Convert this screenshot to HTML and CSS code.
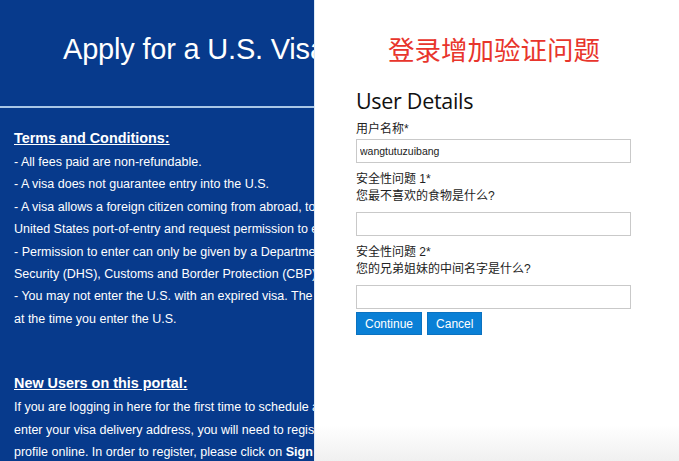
FILE: index.html
```html
<!DOCTYPE html>
<html lang="zh">
<head>
    <meta charset="UTF-8">
    <meta name="viewport" content="width=device-width, initial-scale=1.0">
    <title>Apply for a U.S. Visa</title>
    <link rel="stylesheet" href="styles.css">
</head>
<body>

    <div class="portal">
        <div class="portal-header">
            <h1 class="portal-title">Apply for a U.S. Visa</h1>
        </div>
        <div class="portal-body">
            <h2 class="portal-heading">Terms and Conditions:</h2>
            <p class="portal-line">- All fees paid are non-refundable.</p>
            <p class="portal-line">- A visa does not guarantee entry into the U.S.</p>
            <p class="portal-line">- A visa allows a foreign citizen coming from abroad, to travel to the</p>
            <p class="portal-line">United States port-of-entry and request permission to enter the U.S.</p>
            <p class="portal-line">- Permission to enter can only be given by a Department of Homeland</p>
            <p class="portal-line">Security (DHS), Customs and Border Protection (CBP) official.</p>
            <p class="portal-line">- You may not enter the U.S. with an expired visa. The visa must be valid</p>
            <p class="portal-line">at the time you enter the U.S.</p>

            <h2 class="portal-heading new-users">New Users on this portal:</h2>
            <p class="portal-line">If you are logging in here for the first time to schedule an appointment or</p>
            <p class="portal-line">enter your visa delivery address, you will need to register and create a</p>
            <p class="portal-line">profile online. In order to register, please click on <b>Sign Up</b></p>
        </div>
    </div>

    <div class="details">
        <div class="notice">登录增加验证问题</div>
        <h2 class="details-title">User Details</h2>
        <form class="details-form">
            <label class="field-label first">用户名称*</label>
            <input class="field-input" type="text" value="wangtutuzuibang">

            <label class="field-label question">安全性问题 1*<br>您最不喜欢的食物是什么?</label>
            <input class="field-input" type="text">

            <label class="field-label question">安全性问题 2*<br>您的兄弟姐妹的中间名字是什么?</label>
            <input class="field-input" type="text">

            <div class="form-buttons">
                <button class="btn" type="button">Continue</button>
                <button class="btn" type="button">Cancel</button>
            </div>
        </form>
    </div>

</body>
</html>
```

FILE: styles.css
```css
body {
    margin: 0;
    height: 461px;
    display: flex;
    overflow: hidden;
    font-family: "Liberation Sans", Arial, sans-serif;
}

/* левая синяя часть */
.portal {
    width: 314px;
    flex-shrink: 0;
    background-color: #073a8c;
    color: #fff;
    overflow: hidden;
    white-space: nowrap;
}

.portal-header {
    height: 108px;
    border-bottom: 2px solid #a8c6e6;
    padding-left: 63px;
    box-sizing: border-box;
}

.portal-title {
    margin: 0;
    padding-top: 33px;
    font-size: 29px;
    font-weight: normal;
    letter-spacing: -0.2px;
}

.portal-body {
    padding: 20px 0 0 14px;
}

.portal-heading {
    margin: 0 0 3px;
    font-size: 14.4px;
    text-decoration: underline;
    line-height: 20px;
}

.portal-heading.new-users {
    margin-top: 43px;
}

.portal-line {
    margin: 0;
    font-size: 12.5px;
    line-height: 22.4px;
}

/* правая белая часть */
.details {
    flex: 1;
    border-left: 1px solid #dce9f6;
    background: linear-gradient(to bottom, #fff 0, #fff 425px, #f0f0f0 461px);
    padding-left: 41px;
}

.notice {
    width: 276px;
    text-align: center;
    margin-top: 34px;
    font-family: "Noto Sans CJK SC", sans-serif;
    font-size: 26.5px;
    line-height: 30px;
    color: #e8352c;
}

.details-title {
    margin: 25px 0 0;
    font-family: "Open Sans", sans-serif;
    font-weight: normal;
    font-size: 21.5px;
    line-height: 24px;
    color: #111;
    letter-spacing: -0.3px;
}

.details-form {
    display: flex;
    flex-direction: column;
    width: 275px;
}

.field-label {
    margin-top: 6px;
    font-family: "Liberation Sans", "Noto Sans CJK SC", sans-serif;
    font-size: 12px;
    line-height: 17px;
    color: #222;
}

.field-label.first {
    margin-top: 8px;
}

.field-label.question {
    margin-bottom: 6px;
}

.field-input {
    height: 24px;
    box-sizing: border-box;
    margin: 1px 0 2px;
    border: 1px solid #c9c9c9;
    padding: 0 3px;
    font-family: "Liberation Sans", sans-serif;
    font-size: 10.5px;
    color: #222;
}

.form-buttons {
    display: flex;
    gap: 5px;
    margin-top: 1px;
}

.btn {
    height: 23px;
    padding: 0 8px;
    border: 1px solid #0b72c0;
    background-color: #0a80d6;
    color: #fff;
    font-family: "Liberation Sans", sans-serif;
    font-size: 12px;
    cursor: pointer;
}
```
